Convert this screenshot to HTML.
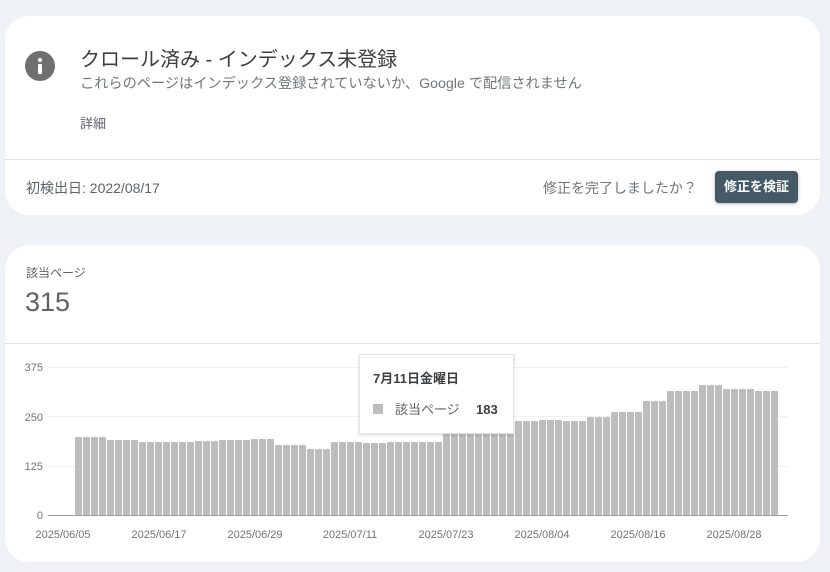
<!DOCTYPE html>
<html><head><meta charset="utf-8"><style>
*{margin:0;padding:0;box-sizing:border-box}
body{width:830px;height:572px;background:#eef2f7;font-family:"Liberation Sans","Noto Sans CJK JP",sans-serif;position:relative;overflow:hidden;color:#202124}
.card{position:absolute;left:5px;width:815px;background:#fff;border-radius:24px}
.abs{position:absolute;white-space:nowrap}
</style></head><body>
<div class="card" style="top:16px;height:199px">
  <div class="abs" style="left:20px;top:35px;width:30px;height:30px;border-radius:50%;background:#6f6f6f">
    <div class="abs" style="left:13px;top:7px;width:4px;height:4px;border-radius:50%;background:#fff"></div>
    <div class="abs" style="left:13px;top:13px;width:4px;height:10px;border-radius:1px;background:#fff"></div>
  </div>
  <div class="abs" style="left:75px;top:27px;font-size:20px;color:#3c4043">クロール済み - インデックス未登録</div>
  <div class="abs" style="left:75px;top:57px;font-size:14.2px;color:#70757a">これらのページはインデックス登録されていないか、Google で配信されません</div>
  <div class="abs" style="left:75px;top:97px;font-size:13px;color:#5f6368">詳細</div>
  <div class="abs" style="left:0;top:143px;width:815px;height:1px;background:#e0e0e0"></div>
  <div class="abs" style="left:21px;top:162px;font-size:14px;color:#5f6368">初検出日: 2022/08/17</div>
  <div class="abs" style="left:538px;top:162px;font-size:14px;color:#70757a">修正を完了しましたか？</div>
  <div class="abs" style="left:710px;top:155px;width:83px;height:32px;background:#455a64;border-radius:4px;box-shadow:0 1px 3px rgba(0,0,0,.3);color:#fff;font-size:13px;font-weight:bold;text-align:center;line-height:32px">修正を検証</div>
</div>
<div class="card" style="top:245px;height:317px">
  <div class="abs" style="left:21px;top:19px;font-size:12px;color:#5f6368">該当ページ</div>
  <div class="abs" style="left:20px;top:42px;font-size:27px;color:#5f6368">315</div>
  <div class="abs" style="left:0;top:98px;width:815px;height:1px;background:#e0e0e0"></div>
</div>
<svg class="abs" style="left:0;top:0" width="830" height="572" id="ch">
  <defs><filter id="sh" x="-10%" y="-10%" width="120%" height="130%"><feDropShadow dx="0" dy="1" stdDeviation="1.5" flood-opacity="0.15"/></filter></defs>
  <g font-family="Liberation Sans, sans-serif" font-size="11" fill="#70757a" text-anchor="end">
    <text x="43" y="371">375</text><text x="43" y="421">250</text><text x="43" y="470">125</text><text x="43" y="519">0</text>
  </g>
  <g stroke="#eef1f4" stroke-width="1">
    <line x1="48" x2="788" y1="367.5" y2="367.5"/><line x1="48" x2="788" y1="416.5" y2="416.5"/><line x1="48" x2="788" y1="466.5" y2="466.5"/>
  </g>
  <g id="bars" fill="#bdbdbd"></g>
  <line x1="48" x2="788" y1="515.5" y2="515.5" stroke="#9e9e9e"/>
  <g font-family="Liberation Sans, sans-serif" font-size="11" fill="#70757a" text-anchor="middle">
    <text x="63" y="538">2025/06/05</text><text x="159" y="538">2025/06/17</text><text x="255" y="538">2025/06/29</text><text x="350" y="538">2025/07/11</text><text x="446" y="538">2025/07/23</text><text x="542" y="538">2025/08/04</text><text x="638" y="538">2025/08/16</text><text x="734" y="538">2025/08/28</text>
  </g>
  <rect x="359.5" y="354.5" width="154" height="79" fill="#fff" stroke="#e4e4e4" filter="url(#sh)"/>
  <text x="373" y="383" font-family="Liberation Sans, Noto Sans CJK JP, sans-serif" font-size="13" font-weight="bold" fill="#3c4043">7月11日金曜日</text>
  <rect x="373" y="404" width="10" height="10" fill="#bdbdbd"/>
  <text x="395" y="414" font-family="Liberation Sans, Noto Sans CJK JP, sans-serif" font-size="13" fill="#5f6368">該当ページ</text>
  <text x="476" y="414" font-family="Liberation Sans, sans-serif" font-size="13" font-weight="bold" fill="#3c4043">183</text>
</svg>
<script>
var seg=[[0,3,437],[4,7,440],[8,14,442],[15,17,441],[18,21,440],[22,24,439],[25,28,445],[29,31,449],[32,35,442],[36,38,443],[39,45,442],[46,49,429],[50,52,425],[53,57,421],[58,60,420],[61,63,421],[64,66,417],[67,70,412],[71,73,401],[74,77,391],[78,80,385],[81,84,389],[85,87,391]];
var g=document.getElementById('bars'),s='';
seg.forEach(function(a){for(var i=a[0];i<=a[1];i++){s+='<rect x="'+(75+8*i)+'" y="'+a[2]+'" width="7" height="'+(515-a[2])+'" rx="1"/>';}});
g.innerHTML=s;
</script>
</body></html>
